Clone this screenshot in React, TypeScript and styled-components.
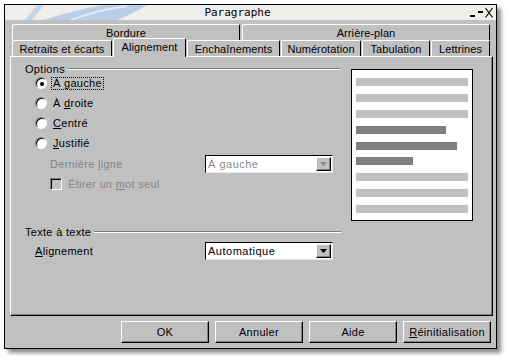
import React from "react";
import styled, { createGlobalStyle, css } from "styled-components";

const GlobalStyle = createGlobalStyle`
  html, body {
    margin: 0;
    padding: 0;
    background: #fff;
  }
  body {
    font-family: "Liberation Sans", Arial, sans-serif;
    font-size: 11px;
    color: #000;
  }
`;

const Page = styled.div`
  width: 509px;
  height: 361px;
  padding: 4px 0 0 4px;
  box-sizing: border-box;
`;

const Window = styled.div`
  width: 493px;
  height: 345px;
  box-sizing: border-box;
  border: 1px solid #000;
  background: #c0c0c0;
  box-shadow: 4px 4px 4px rgba(0, 0, 0, 0.45);
  display: flex;
  flex-direction: column;
`;

const TitleBar = styled.div`
  position: relative;
  height: 15px;
  flex: none;
  background: #efeeeb;
  display: flex;
  align-items: center;
  overflow: hidden;
`;

const Swirl = styled.svg`
  position: absolute;
  left: 0;
  top: 0;
`;

const Title = styled.div`
  position: relative;
  flex: 1;
  text-align: center;
  font-family: "DejaVu Sans Mono", monospace;
  font-size: 11px;
  line-height: 15px;
`;

const Controls = styled.svg`
  margin-right: 2px;
  flex: none;
`;

const Body = styled.div`
  flex: 1;
  display: flex;
  flex-direction: column;
  padding: 4px 3px 0 5px;
`;

const TabStrip = styled.div`
  margin: 0 2px;
  display: flex;
  flex-direction: column;
`;

const TabRow = styled.div<{ $gap: number }>`
  display: flex;
  align-items: flex-end;
  height: 16px;
  gap: ${(p) => p.$gap}px;
`;

const Tab = styled.div<{ $w: number; $active?: boolean }>`
  width: ${(p) => p.$w}px;
  height: 16px;
  flex: none;
  box-sizing: border-box;
  background: #c0c0c0;
  border-top: 1px solid #fff;
  border-left: 1px solid #fff;
  border-right: 1px solid #000;
  border-radius: 2px 2px 0 0;
  display: flex;
  align-items: center;
  justify-content: center;
  letter-spacing: 0.1px;
  white-space: nowrap;
  ${(p) =>
    p.$active &&
    css`
      height: 19px;
      margin-bottom: -1px;
      padding-bottom: 3px;
      position: relative;
      z-index: 1;
    `}
`;

const Panel = styled.div`
  height: 260px;
  flex: none;
  box-sizing: border-box;
  border: 1px solid;
  border-color: #fff #000 #000 #fff;
  box-shadow: inset -1px -1px 0 #808080;
  display: flex;
  align-items: flex-start;
  padding: 6px 0 0 14px;
`;

const LeftColumn = styled.div`
  width: 316px;
  display: flex;
  flex-direction: column;
`;

const GroupHeader = styled.div<{ $top?: number }>`
  display: flex;
  align-items: center;
  gap: 3px;
  height: 12px;
  margin-top: ${(p) => p.$top ?? 0}px;
  letter-spacing: 0.3px;
`;

const GroupLine = styled.div`
  flex: 1;
  border-top: 1px solid #808080;
  border-bottom: 1px solid #fff;
`;

const RadioList = styled.div`
  display: flex;
  flex-direction: column;
  margin-top: -2px;
`;

const RadioRow = styled.div`
  height: 20px;
  display: flex;
  align-items: center;
  padding-left: 10px;
  gap: 4px;
  letter-spacing: 0.3px;
`;

const RadioCircle = styled.div`
  width: 12px;
  height: 12px;
  box-sizing: border-box;
  border-radius: 50%;
  border: 1px solid;
  border-color: #808080 #fff #fff #808080;
  box-shadow: inset 1px 1px 0 #000;
  background: #fff;
  display: flex;
  align-items: center;
  justify-content: center;
  flex: none;
`;

const RadioDot = styled.div`
  width: 4px;
  height: 4px;
  border-radius: 50%;
  background: #000;
  margin: 1px 0 0 1px;
`;

const Label = styled.span<{ $focus?: boolean }>`
  padding: 0 1px;
  line-height: 11px;
  border: 1px dotted ${(p) => (p.$focus ? "#000" : "transparent")};
`;

const U = styled.span`
  text-decoration: underline;
`;

const FieldRow = styled.div<{ $top: number; $indent: number }>`
  display: grid;
  grid-template-columns: 180px 128px;
  align-items: center;
  height: 18px;
  margin-top: ${(p) => p.$top}px;
  letter-spacing: 0.3px;
  & > span:first-child {
    padding-left: ${(p) => p.$indent}px;
  }
`;

const Muted = styled.span`
  color: #868686;
`;

const Combo = styled.div<{ $disabled?: boolean }>`
  width: 128px;
  height: 18px;
  box-sizing: border-box;
  background: #fff;
  border: 1px solid;
  border-color: #000 #e8e8e8 #e8e8e8 #000;
  display: flex;
  align-items: center;
  padding: 0 1px 0 2px;
  color: ${(p) => (p.$disabled ? "#8a8a8a" : "#000")};
  letter-spacing: 0.5px;
`;

const ComboButton = styled.div`
  margin-left: auto;
  width: 15px;
  height: 14px;
  box-sizing: border-box;
  background: #c0c0c0;
  border: 1px solid;
  border-color: #fff #000 #000 #fff;
  box-shadow: inset -1px -1px 0 #808080;
  display: flex;
  align-items: center;
  justify-content: center;
`;

const CheckRow = styled.div`
  display: flex;
  align-items: center;
  gap: 6px;
  height: 12px;
  margin-top: 5px;
  padding-left: 25px;
  letter-spacing: 0.3px;
`;

const CheckBox = styled.div`
  width: 12px;
  height: 12px;
  box-sizing: border-box;
  border: 1px solid;
  border-color: #808080 #fff #fff #808080;
  box-shadow: inset 1px 1px 0 #000;
  background: #c0c0c0;
`;

const Preview = styled.div`
  width: 122px;
  height: 152px;
  box-sizing: border-box;
  margin: 6px 0 0 10px;
  border: 1px solid #000;
  background: #fff;
  padding: 8px 4px 7px;
  display: flex;
  flex-direction: column;
  justify-content: space-between;
`;

const Bar = styled.div<{ $dark?: boolean }>`
  height: 8px;
  background: ${(p) => (p.$dark ? "#808080" : "#c0c0c0")};
`;

const ButtonRow = styled.div`
  display: flex;
  justify-content: flex-end;
  gap: 6px;
  margin-top: 5px;
  padding-right: 2px;
`;

const Button = styled.div`
  width: 88px;
  height: 22px;
  box-sizing: border-box;
  border: 1px solid;
  border-color: #fff #000 #000 #fff;
  box-shadow: inset -1px -1px 0 #808080;
  display: flex;
  align-items: center;
  justify-content: center;
  letter-spacing: 0.3px;
`;

const Arrow = ({ color }: { color: string }) => (
  <svg width="7" height="4" viewBox="0 0 7 4">
    <path d="M0 0 H7 L3.5 4 Z" fill={color} />
  </svg>
);

const previewBars: { w?: number; dark?: boolean }[] = [
  {},
  {},
  {},
  { w: 90, dark: true },
  { w: 101, dark: true },
  { w: 57, dark: true },
  {},
  {},
  {},
];

const App: React.FC = () => {
  return (
    <Page>
      <GlobalStyle />
      <Window>
        <TitleBar>
          <Swirl width="160" height="15" viewBox="0 0 160 15">
            <path d="M20 15 L27 15 L39 0 L32 0 Z" fill="#c4d6ea" />
            <path
              d="M38 15 C58 9 80 3 98 0 L142 0 C132 6 122 11 112 15 Z"
              fill="#b9cfe7"
            />
            <path
              d="M66 15 C82 9 98 4 122 1"
              stroke="#e4edf6"
              strokeWidth="2"
              fill="none"
            />
          </Swirl>
          <Title>Paragraphe</Title>
          <Controls width="24" height="12" viewBox="0 0 24 12">
            <rect x="0" y="8" width="5" height="2" fill="#000" />
            <rect x="8" y="4" width="5" height="2" fill="#000" />
            <path
              d="M15.5 1 L22.5 10.5 M22.5 1 L15.5 10.5"
              stroke="#000"
              strokeWidth="1.2"
            />
          </Controls>
        </TitleBar>
        <Body>
          <TabStrip>
            <TabRow $gap={2}>
              <Tab $w={228}>Bordure</Tab>
              <Tab $w={248}>Arrière-plan</Tab>
            </TabRow>
            <TabRow $gap={1}>
              <Tab $w={100}>Retraits et écarts</Tab>
              <Tab $w={73} $active>
                Alignement
              </Tab>
              <Tab $w={93}>Enchaînements</Tab>
              <Tab $w={80}>Numérotation</Tab>
              <Tab $w={68}>Tabulation</Tab>
              <Tab $w={59}>Lettrines</Tab>
            </TabRow>
          </TabStrip>
          <Panel>
            <LeftColumn>
              <GroupHeader>
                <span>Options</span>
                <GroupLine />
              </GroupHeader>
              <RadioList>
                <RadioRow>
                  <RadioCircle>
                    <RadioDot />
                  </RadioCircle>
                  <Label $focus>
                    À <U>g</U>auche
                  </Label>
                </RadioRow>
                <RadioRow>
                  <RadioCircle />
                  <Label>
                    À <U>d</U>roite
                  </Label>
                </RadioRow>
                <RadioRow>
                  <RadioCircle />
                  <Label>
                    <U>C</U>entré
                  </Label>
                </RadioRow>
                <RadioRow>
                  <RadioCircle />
                  <Label>
                    <U>J</U>ustifié
                  </Label>
                </RadioRow>
              </RadioList>
              <FieldRow $top={2} $indent={25}>
                <Muted>
                  Dernière <U>l</U>igne
                </Muted>
                <Combo $disabled>
                  À gauche
                  <ComboButton>
                    <Arrow color="#8a8a8a" />
                  </ComboButton>
                </Combo>
              </FieldRow>
              <CheckRow>
                <CheckBox />
                <Muted>
                  Étirer un <U>m</U>ot seul
                </Muted>
              </CheckRow>
              <GroupHeader $top={36}>
                <span>Texte à texte</span>
                <GroupLine />
              </GroupHeader>
              <FieldRow $top={4} $indent={10}>
                <span>
                  <U>A</U>lignement
                </span>
                <Combo>
                  Automatique
                  <ComboButton>
                    <Arrow color="#000" />
                  </ComboButton>
                </Combo>
              </FieldRow>
            </LeftColumn>
            <Preview>
              {previewBars.map((b, i) => (
                <Bar
                  key={i}
                  $dark={b.dark}
                  style={b.w ? { width: b.w } : undefined}
                />
              ))}
            </Preview>
          </Panel>
          <ButtonRow>
            <Button>OK</Button>
            <Button>Annuler</Button>
            <Button>Aide</Button>
            <Button>
              <span>
                <U>R</U>éinitialisation
              </span>
            </Button>
          </ButtonRow>
        </Body>
      </Window>
    </Page>
  );
};

export default App;
